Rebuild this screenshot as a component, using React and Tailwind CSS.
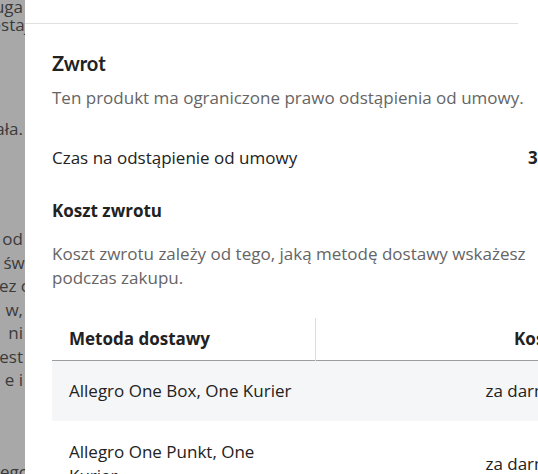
export default function App() {
  const behind = [
    { t: 'usługa', mt: 'mt-[-5px]' },
    { t: 'pozostaj', mt: 'mt-[-5.5px]', cut: true },
    { t: 'działa.', mt: 'mt-[80.5px]' },
    { t: 'od', mt: 'mt-[86.5px]' },
    { t: 'świ', mt: 'mt-0', cut: true },
    { t: 'przez c', mt: 'mt-0', cut: true },
    { t: 'w,', mt: 'mt-0' },
    { t: 'ni', mt: 'mt-0' },
    { t: 'jest', mt: 'mt-0' },
    { t: 'e i', mt: 'mt-0' },
    { t: 'tego', mt: 'mt-[68.5px]', cut: true },
  ];

  return (
    <div
      className="w-[538px] h-[474px] overflow-hidden flex bg-white text-[#222222]"
      style={{ fontFamily: '"Open Sans", "Noto Sans", sans-serif' }}
    >
      {/* dimmed page behind the drawer */}
      <div className="w-[25px] shrink-0 bg-[#a8a8a8] overflow-hidden flex flex-col text-[17px] leading-[23.5px] text-[#3b3b3b]">
        {behind.map((l, i) => (
          <div key={i} className={`shrink-0 flex justify-end whitespace-nowrap ${l.mt}`}>
            <span className={l.cut ? '-mr-[4px]' : 'pr-[2px]'}>{l.t}</span>
          </div>
        ))}
      </div>

      {/* drawer */}
      <div className="w-[581px] shrink-0 flex flex-col">
        <div className="h-[24px] shrink-0 w-[493px] border-b border-[#e0e0e0]" />

        <div className="shrink-0 px-[27px] pt-[25px] text-[17px] leading-6">
          <h2
            className="text-[20px] leading-[28px] font-bold text-[#222222]"
            style={{ fontFamily: 'Lato, "Open Sans", sans-serif' }}
          >
            Zwrot
          </h2>
          <p className="mt-[9px] text-[#656565]">
            Ten produkt ma ograniczone prawo odstąpienia od umowy.
          </p>

          <div className="mt-[36px] flex justify-between">
            <span>Czas na odstąpienie od umowy</span>
            <span className="font-bold">30 dni</span>
          </div>

          <h3 className="mt-[29px] font-bold">Koszt zwrotu</h3>
          <p className="mt-[19px] text-[#656565]">
            Koszt zwrotu zależy od tego, jaką metodę dostawy wskażesz podczas zakupu.
          </p>

          <table className="mt-[28px] w-full border-collapse">
            <thead>
              <tr className="border-b border-[#9e9e9e]">
                <th className="w-[263px] h-[42px] pl-[17px] text-left font-bold border-r border-[#dddddd]">
                  Metoda dostawy
                </th>
                <th className="h-[42px] pr-[19px] text-right font-bold">Koszt</th>
              </tr>
            </thead>
            <tbody>
              <tr className="bg-[#f5f6f7]">
                <td className="h-[60px] pl-[17px] py-[18px] align-middle">
                  Allegro One Box, One Kurier
                </td>
                <td className="pr-[19px] text-right">za darmo</td>
              </tr>
              <tr>
                <td className="pl-[17px] pr-4 py-[19px] align-top">
                  Allegro One Punkt, One Kurier
                </td>
                <td className="pr-[19px] text-right align-middle">za darmo</td>
              </tr>
            </tbody>
          </table>
        </div>
      </div>
    </div>
  );
}
